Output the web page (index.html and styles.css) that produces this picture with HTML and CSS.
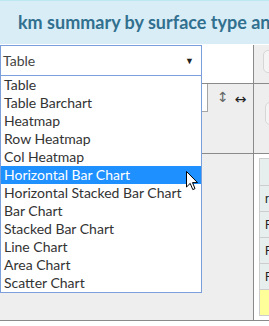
FILE: index.html
```html
<!DOCTYPE html>
<html>
<head>
  <title>km summary</title>
  <link rel="stylesheet" href="styles.css">
</head>
<body>

  <div class="header">
    <h2>km summary by surface type and region</h2>
  </div>

  <div class="pvt">
    <div class="cell renderer">
      <div class="select">
        <span>Table</span>
        <span class="caret">&#9660;</span>
      </div>
    </div>
    <div class="cell axis">
      <div class="axis-box top"></div>
    </div>

    <div class="cell vals">
      <div class="agg-box"></div>
      <span class="order">&#8597;</span>
      <span class="order dark">&#8596;</span>
    </div>
    <div class="cell axis">
      <div class="axis-box mid"></div>
    </div>

    <div class="cell rows"></div>
    <div class="cell output">
      <table class="result">
        <tr class="head"><td class="pad">&nbsp;</td><td>surface</td></tr>
        <tr><td>road</td></tr>
        <tr><td>Forest</td></tr>
        <tr><td>Field</td></tr>
        <tr><td>Farm</td></tr>
        <tr class="total"><td>&nbsp;</td></tr>
      </table>
    </div>
  </div>

  <ul class="options">
    <li>Table</li>
    <li>Table Barchart</li>
    <li>Heatmap</li>
    <li>Row Heatmap</li>
    <li>Col Heatmap</li>
    <li class="active">Horizontal Bar Chart</li>
    <li>Horizontal Stacked Bar Chart</li>
    <li>Bar Chart</li>
    <li>Stacked Bar Chart</li>
    <li>Line Chart</li>
    <li>Area Chart</li>
    <li>Scatter Chart</li>
  </ul>

  <svg class="cursor" width="13" height="20" viewBox="0 0 13 20">
    <path d="M0.5 0.5 L0.5 16 L4.2 12.4 L6.8 18.6 L9 17.6 L6.5 11.6 L11.5 11.6 Z" fill="#fff" stroke="#000" stroke-width="1"/>
  </svg>

</body>
</html>
```

FILE: styles.css
```css
html {
  overflow: hidden;
}
body {
  margin: 0;
  font-family: Lato, "Open Sans", sans-serif;
  background-color: #fff;
  position: relative;
}
.header {
  height: 43px;
  background-color: #d9edf7;
  border-top: 1px solid #bce8f1;
  padding-left: 18px;
  white-space: nowrap;
  overflow: hidden;
}
.header h2 {
  margin: 0;
  padding-top: 10px;
  font-size: 18px;
  font-weight: bold;
  color: #31708f;
}
.pvt {
  margin-top: 1px;
  display: grid;
  grid-template-columns: 253px 320px;
  grid-template-rows: 38px 69px 166px;
  column-gap: 1px;
  row-gap: 1px;
  background-color: #8a8a8a;
  border-bottom: 1px solid #8a8a8a;
  width: 574px;
}
.cell {
  background-color: #eee;
  overflow: hidden;
}
.renderer {
  background-color: #fff;
}
.select {
  height: 29px;
  border: 1px solid #7b9fdb;
  background-color: #fff;
  display: flex;
  align-items: center;
  justify-content: space-between;
  padding: 0 0 0 2px;
  width: 198px;
  font-size: 14px;
  color: #444;
}
.caret {
  font-size: 9px;
  color: #222;
  margin-right: 7px;
}
.axis-box {
  margin-left: 9px;
  height: 21px;
  border: 1px solid #d6d6d6;
  border-radius: 5px;
  background-color: #f4f4f4;
}
.axis-box.top {
  margin-top: 5px;
}
.axis-box.mid {
  margin-top: 18px;
  margin-left: 11px;
}
.vals {
  display: flex;
  align-items: flex-start;
}
.agg-box {
  margin-left: 5px;
  width: 201px;
  height: 27px;
  background-color: #fff;
  border: 1px solid #a5a5a5;
  border-top: none;
}
.order {
  margin-top: 5px;
  margin-left: 9px;
  font-family: "DejaVu Sans", sans-serif;
  font-size: 14px;
  color: #666;
}
.order.dark {
  margin-left: 6px;
  margin-top: 7px;
  color: #222;
}
.output {
  background-color: #fff;
  padding: 4px 0 0 5px;
}
.result {
  border-collapse: collapse;
  font-family: Arial, "Liberation Sans", sans-serif;
  font-size: 12px;
  color: #222;
}
.result td {
  width: 120px;
  height: 25px;
  padding: 0 0 0 5px;
  background-color: #e6eeee;
  border: 1px solid #cdcdcd;
  white-space: nowrap;
}
.result .head td {
  height: 26px;
}
.result .total td {
  background-color: #ffff99;
}
.options {
  position: absolute;
  top: 75px;
  left: 0;
  width: 200px;
  margin: 0;
  padding: 0;
  list-style: none;
  background-color: #fff;
  border: 1px solid #7b9fdb;
}
.options li {
  height: 18px;
  line-height: 18px;
  padding-left: 3px;
  font-size: 14px;
  color: #333;
  white-space: nowrap;
}
.options li.active {
  background-color: #1e90ff;
  color: #fff;
}
.cursor {
  position: absolute;
  left: 186px;
  top: 171px;
}
```
